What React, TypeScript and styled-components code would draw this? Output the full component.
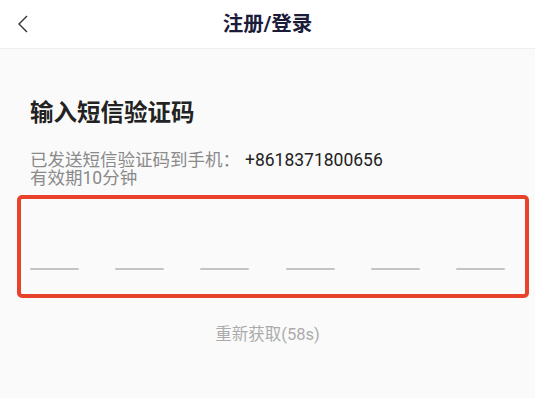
import React from "react";
import styled, { createGlobalStyle } from "styled-components";

const Global = createGlobalStyle`
  html, body { margin: 0; padding: 0; background: #fafafa; }
  body { font-family: Roboto, "Noto Sans CJK SC", sans-serif; }
`;

const Page = styled.div`
  width: 535px;
  height: 398px;
  background: #fafafa;
  display: flex;
  flex-direction: column;
`;

const Header = styled.header`
  height: 48px;
  background: #ffffff;
  border-bottom: 1px solid #eeeeee;
  display: flex;
  align-items: center;
  justify-content: center;
  position: relative;
`;

const Back = styled.button`
  position: absolute;
  left: 12px;
  top: 12px;
  width: 22px;
  height: 24px;
  border: none;
  background: transparent;
  padding: 0;
  display: flex;
  align-items: center;
  justify-content: center;
`;

const Title = styled.h1`
  margin: 0;
  font-size: 20.5px;
  font-weight: 700;
  color: #1b1b3a;
  line-height: 1;
`;

const Content = styled.main`
  padding: 49px 30px 0 30px;
  display: flex;
  flex-direction: column;
`;

const Heading = styled.h2`
  margin: 0;
  font-size: 23.5px;
  font-weight: 700;
  color: #222;
  line-height: 30px;
`;

const Info = styled.p`
  margin: 23px 0 0 0;
  font-size: 17.5px;
  line-height: 18px;
  color: #8a8a8a;
`;

const Phone = styled.span`
  color: #222;
  margin-left: 5px;
`;

const CodeBox = styled.div`
  margin: 8px 0 0 -13px;
  width: 512px;
  height: 103px;
  box-sizing: border-box;
  border: 4px solid #e8412c;
  border-radius: 5px;
  display: flex;
  align-items: flex-end;
  justify-content: space-between;
  padding: 0 20px 24px 9px;
`;

const Slot = styled.span`
  width: 49px;
  height: 2px;
  border-radius: 1px;
  background: #c4c4c4;
`;

const Resend = styled.div`
  margin: 27px -30px 0 -30px;
  text-align: center;
  font-size: 16.5px;
  color: #ababab;
  line-height: 20px;
`;

export default function App() {
  return (
    <>
      <Global />
      <Page>
        <Header>
          <Back aria-label="back">
            <svg width="12" height="20" viewBox="0 0 12 20">
              <path d="M10 2 L2 10 L10 18" fill="none" stroke="#333" strokeWidth="1.4" />
            </svg>
          </Back>
          <Title>注册/登录</Title>
        </Header>
        <Content>
          <Heading>输入短信验证码</Heading>
          <Info>
            已发送短信验证码到手机：<Phone>+8618371800656</Phone>
            <br />
            有效期10分钟
          </Info>
          <CodeBox>
            {[0, 1, 2, 3, 4, 5].map((i) => (
              <Slot key={i} />
            ))}
          </CodeBox>
          <Resend>重新获取(58s)</Resend>
        </Content>
      </Page>
    </>
  );
}
